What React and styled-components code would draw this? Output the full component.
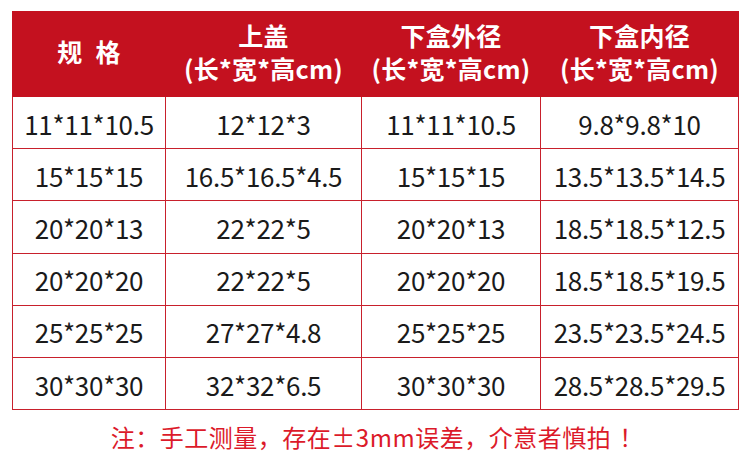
import React from 'react';
import styled, { createGlobalStyle } from 'styled-components';

const GlobalStyle = createGlobalStyle`
   html, body {
      margin: 0;
      padding: 0;
      background: #ffffff;
   }
   body {
      font-family: "Noto Sans CJK SC", "Noto Sans", sans-serif;
   }
`;

const headers = [
   { title: '规\u2002格' },
   { title: '上盖', sub: '(长*宽*高cm)' },
   { title: '下盒外径', sub: '(长*宽*高cm)' },
   { title: '下盒内径', sub: '(长*宽*高cm)' },
];

const rows = [
   ['11*11*10.5', '12*12*3', '11*11*10.5', '9.8*9.8*10'],
   ['15*15*15', '16.5*16.5*4.5', '15*15*15', '13.5*13.5*14.5'],
   ['20*20*13', '22*22*5', '20*20*13', '18.5*18.5*12.5'],
   ['20*20*20', '22*22*5', '20*20*20', '18.5*18.5*19.5'],
   ['25*25*25', '27*27*4.8', '25*25*25', '23.5*23.5*24.5'],
   ['30*30*30', '32*32*6.5', '30*30*30', '28.5*28.5*29.5'],
];

const App = () => {
   return (
      <Page>
         <GlobalStyle />
         <Grid>
            {headers.map((h, i) => (
               <HeadCell key={h.title} $last={i === headers.length - 1}>
                  <HeadText>{h.title}</HeadText>
                  {h.sub && <HeadText>{h.sub}</HeadText>}
               </HeadCell>
            ))}
            {rows.map((r, i) =>
               r.map((c, j) => <Cell key={`${i}-${j}`}>{c}</Cell>)
            )}
         </Grid>
         <Note>
            注：手工测量，存在±3mm误差，介意者慎拍<Bang>！</Bang>
         </Note>
      </Page>
   );
};

export default App;

const Page = styled.div`
   width: 750px;
   height: 461px;
   padding: 11px 12px 0;
   box-sizing: border-box;
   overflow: hidden;
`;

const Grid = styled.div`
   display: grid;
   width: 726px;
   grid-template-columns: 153px 196px 179px 198px;
   grid-template-rows: 86px repeat(6, 52.2px);
   border-left: 1.5px solid #c8202c;
   box-sizing: border-box;
`;

const HeadCell = styled.div`
   display: flex;
   flex-direction: column;
   align-items: center;
   justify-content: center;
   background: #c4111f;
   color: #ffffff;
   font-weight: 700;
   border-right: 1.5px solid ${(p) => (p.$last ? '#c4111f' : '#f1d0d3')};
   margin-left: -1.5px;
   padding: 0 0 5px 1.5px;
`;

const HeadText = styled.div`
   font-size: 25px;
   line-height: 33px;
   letter-spacing: 0.3px;
   white-space: pre;
`;

const Cell = styled.div`
   display: flex;
   align-items: center;
   justify-content: center;
   font-size: 26px;
   color: #1a1a1a;
   border-right: 1.5px solid #c8202c;
   border-bottom: 1.5px solid #c8202c;
   letter-spacing: -0.3px;
   font-weight: 400;
   padding-top: 1px;
`;

const Note = styled.div`
   margin-top: 12px;
   text-align: center;
   color: #dc1a2a;
   font-size: 24px;
   line-height: 30px;
   letter-spacing: 0.5px;
   padding-left: 4px;
   font-weight: 400;
`;

const Bang = styled.span`
   display: inline-block;
   width: 24px;
   padding-left: 8px;
   text-align: left;
`;
